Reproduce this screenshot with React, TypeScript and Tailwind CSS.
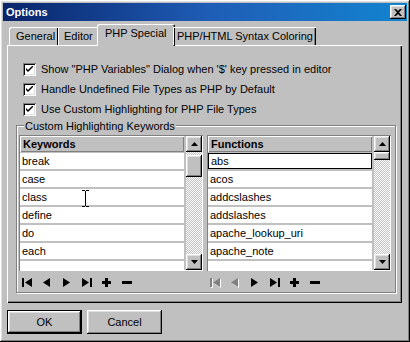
import React from 'react';

const raised = 'shadow-[inset_-1px_-1px_#000,inset_1px_1px_#fff,inset_-2px_-2px_#808080,inset_2px_2px_#dfdfdf]';
const sunken = 'shadow-[inset_1px_1px_#808080,inset_-1px_-1px_#fff,inset_2px_2px_#000,inset_-2px_-2px_#dfdfdf]';
const checker = 'bg-[repeating-conic-gradient(#c0c0c0_0_25%,#fff_0_50%)] bg-[length:2px_2px]';

function Check() {
  return (
    <div className={`w-[13px] h-[13px] bg-white ${sunken} flex items-center justify-center`}>
      <svg width="7" height="7" viewBox="0 0 7 7">
        <path d="M0 2 L0 4 L2 6 L7 1 L7 -1 L2 4 Z" fill="#000" />
      </svg>
    </div>
  );
}

function CheckRow({ label }: { label: string }) {
  return (
    <div className="h-[20px] flex items-center">
      <Check />
      <span className="ml-[5px]">{label}</span>
    </div>
  );
}

function Arrow({ dir }: { dir: 'up' | 'down' }) {
  return (
    <div className={`w-[16px] h-[16px] bg-[#c0c0c0] ${raised} flex items-center justify-center`}>
      <svg width="7" height="4" viewBox="0 0 7 4">
        {dir === 'up' ? <path d="M3.5 0 L7 4 L0 4 Z" fill="#000" /> : <path d="M0 0 L7 0 L3.5 4 Z" fill="#000" />}
      </svg>
    </div>
  );
}

function NavIcon({ kind, disabled }: { kind: string; disabled?: boolean }) {
  const fill = disabled ? '#808080' : '#000';
  const shape = (c: string, o: number) => {
    switch (kind) {
      case 'first':
        return <g fill={c} transform={`translate(${o},${o})`}><rect x="0" y="0" width="2" height="9" /><path d="M10 0 L3 4.5 L10 9 Z" /></g>;
      case 'prior':
        return <g fill={c} transform={`translate(${o},${o})`}><path d="M8 0 L1 4.5 L8 9 Z" /></g>;
      case 'next':
        return <g fill={c} transform={`translate(${o},${o})`}><path d="M1 0 L8 4.5 L1 9 Z" /></g>;
      case 'last':
        return <g fill={c} transform={`translate(${o},${o})`}><path d="M0 0 L7 4.5 L0 9 Z" /><rect x="8" y="0" width="2" height="9" /></g>;
      case 'plus':
        return <g fill={c} transform={`translate(${o},${o})`}><rect x="3" y="0" width="3" height="9" /><rect x="0" y="3" width="9" height="3" /></g>;
      default:
        return <g fill={c} transform={`translate(${o},${o})`}><rect x="0" y="3" width="10" height="3" /></g>;
    }
  };
  return (
    <div className="w-[20px] h-[10px] flex items-center">
      <svg width="12" height="10" viewBox="0 0 12 10">
        {disabled && shape('#fff', 1)}
        {shape(fill, 0)}
      </svg>
    </div>
  );
}

function Grid({ title, rows, focused, bigThumb, navDisabled, cursor }: { title: string; rows: string[]; focused?: boolean; bigThumb?: boolean; navDisabled?: boolean; cursor?: boolean }) {
  return (
    <div className="w-[184px] flex flex-col">
      <div className="h-[136px] flex shadow-[inset_1px_1px_#808080,inset_-1px_-1px_#fff] p-[1px]">
        <div className="flex-1 bg-white flex flex-col">
          <div className="h-[17px] bg-[#c0c0c0] border-r-2 border-b border-[#c0c0c0] shadow-[inset_1px_1px_#fff,inset_-1px_-1px_#808080] flex items-center pl-[3px] font-bold">
            {title}
          </div>
          {rows.map((r, i) => (
            <div key={r} className="relative h-[18px] border-b-2 border-r-2 border-[#c0c0c0]">
              <div className={`h-full flex items-center pl-[2px] ${focused && i === 0 ? 'border border-black pl-[1px]' : ''}`}>{r}</div>
              {cursor && r === 'class' && (
                <svg className="absolute left-[61px] top-[1px]" width="9" height="17" viewBox="0 0 9 17">
                  <path d="M1 0.5 H4 M5 0.5 H8 M4.5 1 V16 M1 16.5 H4 M5 16.5 H8" stroke="#000" strokeWidth="1" fill="none" />
                </svg>
              )}
            </div>
          ))}
          <div className="flex-1 border-r-2 border-[#c0c0c0]" />
        </div>
        <div className={`w-[16px] flex flex-col ${checker}`}>
          <Arrow dir="up" />
          {bigThumb ? (
            <div className={`mt-[3px] h-[22px] bg-[#c0c0c0] ${raised}`} />
          ) : (
            <div className={`mt-[0px] h-[8px] bg-[#c0c0c0] ${raised}`} />
          )}
          <div className="flex-1" />
          <Arrow dir="down" />
        </div>
      </div>
      <div className="mt-[7px] pl-[3px] flex">
        <NavIcon kind="first" disabled={navDisabled} />
        <NavIcon kind="prior" disabled={navDisabled} />
        <NavIcon kind="next" />
        <NavIcon kind="last" />
        <NavIcon kind="plus" />
        <NavIcon kind="minus" />
      </div>
    </div>
  );
}

export default function App() {
  return (
    <div className={`w-[410px] h-[342px] bg-[#c0c0c0] p-[3px] ${raised} font-['Liberation_Sans',Arial,sans-serif] text-[11px] text-black flex flex-col`}>
      {/* Title bar */}
      <div className="h-[18px] flex items-center justify-between pl-[3px] pr-[1px] bg-gradient-to-r from-[#0a246a] via-[#1f5cb5] to-[#1084d0]">
        <span className="text-white font-bold">Options</span>
        <div className={`w-[16px] h-[14px] bg-[#c0c0c0] ${raised} flex items-center justify-center`}>
          <svg width="8" height="7" viewBox="0 0 8 7">
            <path d="M0 0 L2 0 L4 2 L6 0 L8 0 L5 3.5 L8 7 L6 7 L4 5 L2 7 L0 7 L3 3.5 Z" fill="#000" />
          </svg>
        </div>
      </div>

      <div className="pt-[3px] pl-[4px] flex flex-col">
        {/* Tabs */}
        <div className="h-[21px] flex items-end pl-[2px] relative z-10">
          <div className="w-[49px] h-[18px] rounded-tl-[2px] shadow-[inset_1px_1px_#fff,inset_-1px_0_#000] flex items-center pl-[7px]">General</div>
          <div className="w-[41px] h-[18px] shadow-[inset_1px_1px_#fff,inset_-1px_0_#000] flex items-center pl-[6px]">Editor</div>
          <div className="w-[78px] -mx-[2px] h-[22px] -mb-[1px] bg-[#c0c0c0] rounded-t-[2px] shadow-[inset_1px_1px_#fff,inset_-1px_0_#000,inset_-2px_0_#808080] flex items-center pl-[8px] pb-[3px]">PHP Special</div>
          <div className="w-[143px] h-[18px] shadow-[inset_1px_1px_#fff,inset_-1px_0_#000,inset_-2px_0_#808080] flex items-center pl-[4px]">PHP/HTML Syntax Coloring</div>
        </div>

        {/* Panel */}
        <div className={`w-[395px] h-[258px] shadow-[inset_1px_1px_#fff,inset_-1px_-1px_#000,inset_-2px_-2px_#808080] pt-[14px] flex flex-col`}>
          <div className="pl-[16px] flex flex-col">
            <CheckRow label={'Show "PHP Variables" Dialog when \'$\' key pressed in editor'} />
            <CheckRow label="Handle Undefined File Types as PHP by Default" />
            <CheckRow label="Use Custom Highlighting for PHP File Types" />
          </div>

          <div className="relative ml-[9px] mt-[6px] w-[380px] h-[168px] border border-[#808080] shadow-[inset_1px_1px_#fff,1px_1px_#fff] pt-[9px] px-[2px] flex gap-[4px]">
            <span className="absolute left-[7px] -top-[8px] px-[1px] bg-[#c0c0c0]">Custom Highlighting Keywords</span>
            <Grid title="Keywords" rows={['break', 'case', 'class', 'define', 'do', 'each']} bigThumb cursor />
            <Grid title="Functions" rows={['abs', 'acos', 'addcslashes', 'addslashes', 'apache_lookup_uri', 'apache_note']} focused navDisabled />
          </div>
        </div>

        {/* Buttons */}
        <div className="mt-[7px] flex gap-[5px]">
          <div className="w-[75px] h-[24px] border border-black">
            <div className={`w-full h-full bg-[#c0c0c0] ${raised} flex items-center justify-center`}>OK</div>
          </div>
          <div className={`w-[75px] h-[24px] bg-[#c0c0c0] ${raised} flex items-center justify-center`}>Cancel</div>
        </div>
      </div>
    </div>
  );
}
